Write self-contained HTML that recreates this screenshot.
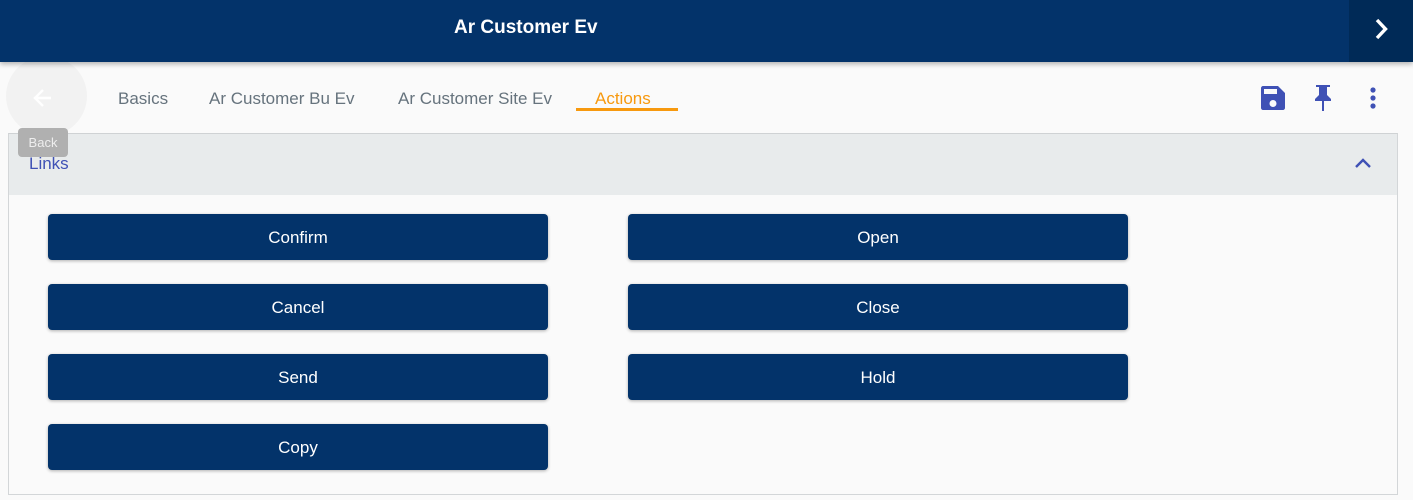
<!DOCTYPE html>
<html><head><style>
*{box-sizing:border-box;margin:0;padding:0}
body{width:1413px;height:500px;background:#fafafa;font-family:"Liberation Sans",sans-serif;position:relative;overflow:hidden}
.hdr{position:absolute;left:0;top:0;width:1413px;height:62px;background:#03336a;box-shadow:0 2px 5px rgba(0,0,0,.3);z-index:2}
.hdr .t{position:absolute;left:454px;top:17px;color:#fff;font-weight:bold;font-size:19px}
.hdr .r{position:absolute;left:1349px;top:0;width:64px;height:62px;background:#002a57}
.tab{position:absolute;top:89px;font-size:17px;color:#66737d}
.panel{position:absolute;left:8px;top:133px;width:1390px;height:362px;border:1px solid #d3d6d8;border-top:1px solid #cfd2d4;background:#fafafa}
.ph{position:absolute;left:0;top:0;width:100%;height:61px;background:#e8ebec}
.btn{position:absolute;width:500px;height:46px;background:#03336a;border-radius:4px;color:#fff;font-size:17px;text-align:center;line-height:47px;box-shadow:0 1px 3px rgba(0,0,0,.3)}
</style></head><body>
<div class="hdr"><div class="t">Ar Customer Ev</div><div class="r">
<svg style="position:absolute;left:22px;top:17px" width="20" height="24" viewBox="0 0 20 24"><path d="M6 3l8.5 9-8.5 9" stroke="#fff" stroke-width="3.4" fill="none"/></svg></div></div>
<div style="position:absolute;left:6px;top:56px;width:81px;height:80px;border-radius:50%;background:#f2f2f2"></div>
<svg style="position:absolute;left:31px;top:86px" width="24" height="24" viewBox="0 0 24 24"><path d="M20 12H5M12 4l-8 8 8 8" stroke="#fff" stroke-width="2.5" fill="none"/></svg>
<div class="tab" style="left:118px">Basics</div>
<div class="tab" style="left:209px">Ar Customer Bu Ev</div>
<div class="tab" style="left:398px">Ar Customer Site Ev</div>
<div class="tab" style="left:595px;color:#f7990e">Actions</div>
<div style="position:absolute;left:576px;top:108px;width:102px;height:3px;background:#f7990e"></div>
<svg style="position:absolute;left:1261px;top:86px" width="24" height="24" viewBox="0 0 24 24"><path fill="#3f51b5" d="M17 0H2C1 0 0 1 0 2v20c0 1 1 2 2 2h20c1 0 2-1 2-2V7zM12 21a3.5 3.5 0 1 1 0-7 3.5 3.5 0 0 1 0 7zM16 8H3V3h13z"/></svg>
<svg style="position:absolute;left:1312px;top:85px" width="22" height="26" viewBox="0 0 22 26"><path fill="#3f51b5" d="M4 0h14v2h-3v8l4 4v2h-7v10h-2V16H3v-2l4-4V2H4z"/></svg>
<svg style="position:absolute;left:1366px;top:86px" width="14" height="24" viewBox="0 0 14 24"><circle cx="7" cy="4" r="2.6" fill="#3f51b5"/><circle cx="7" cy="12" r="2.6" fill="#3f51b5"/><circle cx="7" cy="20" r="2.6" fill="#3f51b5"/></svg>
<div class="panel"><div class="ph">
<div style="position:absolute;left:20px;top:20px;font-size:17px;color:#3f51b5">Links</div>
<svg style="position:absolute;left:1345px;top:22px" width="18" height="14" viewBox="0 0 18 14"><path d="M2 11l7-7 7 7" stroke="#3f51b5" stroke-width="2.4" fill="none"/></svg>
</div></div>
<div style="position:absolute;left:18px;top:128px;width:50px;height:29px;background:#b0b0b0;border-radius:4px;color:#eee;font-size:13px;text-align:center;line-height:29px">Back</div>
<div class="btn" style="left:48px;top:214px">Confirm</div>
<div class="btn" style="left:48px;top:284px">Cancel</div>
<div class="btn" style="left:48px;top:354px">Send</div>
<div class="btn" style="left:48px;top:424px">Copy</div>
<div class="btn" style="left:628px;top:214px">Open</div>
<div class="btn" style="left:628px;top:284px">Close</div>
<div class="btn" style="left:628px;top:354px">Hold</div>
</body></html>
